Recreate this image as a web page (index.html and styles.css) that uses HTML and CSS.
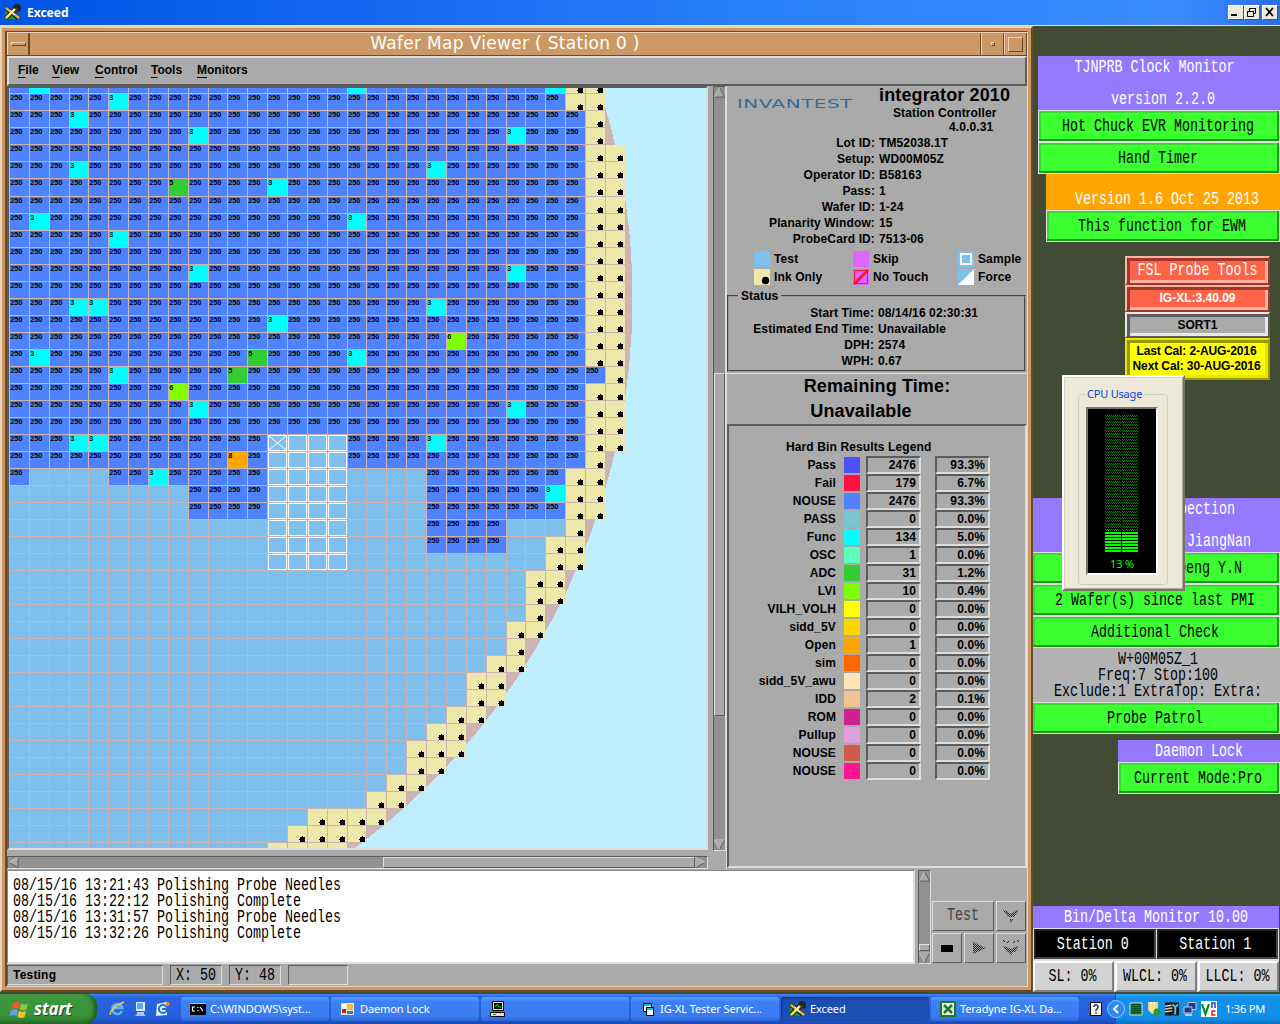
FILE: index.html
```html
<!DOCTYPE html>
<html lang="en">
<head>
<meta charset="utf-8">
<title>Exceed</title>
<link rel="stylesheet" href="styles.css">
</head>
<body>
<svg width="0" height="0" class="defs" aria-hidden="true">
  <symbol id="exceed" viewBox="0 0 16 16">
    <path d="M0 3h4v12H0z" fill="#0a9a3a"/><path d="M4 12h9v3H4z" fill="#0a9a3a"/>
    <circle cx="12" cy="4" r="4" fill="#222"/><path d="M8 4h5v5H8z" fill="#3a3a3a"/>
    <path d="M1 4l12 10" stroke="#111" stroke-width="4"/><path d="M1 14L10 5" stroke="#111" stroke-width="4.500"/>
    <path d="M1 4l13 10" stroke="#e8b040" stroke-width="2.600"/><path d="M1 14L10 5" stroke="#ffe23a" stroke-width="2.500"/>
    <path d="M5 6l5 5M9 5l-4 5" stroke="#fff" stroke-width="1"/>
  </symbol>
</svg>
<div class="desktop">
  <header class="xbar">
    <svg class="xicon"><use href="#exceed"/></svg><b>Exceed</b>
    <div class="winbtns">
      <span><svg viewBox="0 0 13 12"><path d="M2 9h6" stroke="#000" stroke-width="2"/></svg></span>
      <span><svg viewBox="0 0 13 12"><path d="M4.500 5V2.500h6v5H9M4 2.500h7M2.500 5.500h6v5h-6zM2 5.500h7" fill="none" stroke="#000"/></svg></span>
      <span class="gap"><svg viewBox="0 0 13 12"><path d="M3 2l7 8M10 2L3 10" stroke="#000" stroke-width="1.800"/></svg></span>
    </div>
  </header>

  <section class="frame"><div class="frame-in">
    <div class="titlebar">
      <div class="tb-btn tb-menu"><i></i></div>
      <div class="tb-title">Wafer Map Viewer ( Station 0 )</div>
      <div class="tb-btn tb-min"><i></i></div>
      <div class="tb-btn tb-max"><i></i></div>
    </div>
    <nav class="menubar">
      <span class="m1"><u>F</u>ile</span><span class="m2"><u>V</u>iew</span><span class="m3"><u>C</u>ontrol</span><span class="m4"><u>T</u>ools</span><span class="m5"><u>M</u>onitors</span>
    </nav>
    <div class="main">
      <div class="mapcol">
        <div class="mapframe"><svg id="wafer" width="697" height="760" viewBox="9 88 697 760"></svg></div>
        <div class="hscroll">
          <svg class="arrow" viewBox="0 0 12 12"><path d="M11 0.500L1 6l10 5.500z" fill="#aaa" stroke="#5c5c5c"/><path d="M11 .5L1 6" stroke="#dedede"/></svg>
          <div class="hthumb"></div>
          <svg class="arrow" viewBox="0 0 12 12"><path d="M1 0.500L11 6 1 11.500z" fill="#aaa" stroke="#5c5c5c"/><path d="M1 11V.5L11 6" stroke="#dedede" fill="none"/></svg>
        </div>
      </div>
      <div class="vscroll map-v">
        <svg class="arrow" viewBox="0 0 12 12"><path d="M6 .5L.5 11h11z" fill="#aaa" stroke="#5c5c5c"/><path d="M6 .5L.5 11" stroke="#dedede"/></svg>
        <div class="vthumb"></div>
        <svg class="arrow low" viewBox="0 0 12 12"><path d="M.5 1h11L6 11.500z" fill="#aaa" stroke="#5c5c5c"/><path d="M6 11L.5 1h11" stroke="#dedede" fill="none"/></svg>
      </div>
      <aside class="panel">
        <div class="head">
          <div class="logo">INVANTEST</div>
          <div class="prod"><div class="p1">integrator 2010</div><div class="p2">Station Controller</div><div class="p3">4.0.0.31</div></div>
        </div>
        <dl class="info">
          <dt>Lot ID:</dt><dd>TM52038.1T</dd>
          <dt>Setup:</dt><dd>WD00M05Z</dd>
          <dt>Operator ID:</dt><dd>B58163</dd>
          <dt>Pass:</dt><dd>1</dd>
          <dt>Wafer ID:</dt><dd>1-24</dd>
          <dt>Planarity Window:</dt><dd>15</dd>
          <dt>ProbeCard ID:</dt><dd>7513-06</dd>
        </dl>
        <div class="key">
          <svg><rect width="16" height="16" fill="#7ebfee"/></svg><span>Test</span>
          <svg><rect width="16" height="16" fill="#e066ff"/></svg><span>Skip</span>
          <svg><rect width="16" height="16" fill="#7ebfee"/><rect x="3" y="3" width="10" height="10" fill="none" stroke="#fff" stroke-width="2"/></svg><span>Sample</span>
          <svg><rect width="16" height="16" fill="#eee8aa"/><circle cx="11.500" cy="11.500" r="3.700"/></svg><span>Ink Only</span>
          <svg><rect width="16" height="16" fill="#e066ff"/><path d="M1.500 1.500h13v13h-13zM1.500 14.500l13-13" fill="none" stroke="#ff1040"/><path d="M1 15L15 1" stroke="#ff1040" stroke-width="3"/></svg><span>No Touch</span>
          <svg><rect width="16" height="16" fill="#7ebfee"/><path d="M16 0v16H0z" fill="#fff"/></svg><span>Force</span>
        </div>
        <fieldset class="status"><legend>Status</legend>
          <dl class="info">
            <dt>Start Time:</dt><dd>08/14/16 02:30:31</dd>
            <dt>Estimated End Time:</dt><dd>Unavailable</dd>
            <dt>DPH:</dt><dd>2574</dd>
            <dt>WPH:</dt><dd>0.67</dd>
          </dl>
        </fieldset>
        <div class="remain"><div>Remaining Time:</div><div class="un">Unavailable</div></div>
        <div class="bins"><h3>Hard Bin Results Legend</h3><div id="binrows"></div></div>
      </aside>
    </div>
    <div class="logrow">
      <div class="log"><pre class="song">08/15/16 13:21:43 Polishing Probe Needles
08/15/16 13:22:12 Polishing Complete
08/15/16 13:31:57 Polishing Probe Needles
08/15/16 13:32:26 Polishing Complete</pre></div>
      <div class="vscroll log-v">
        <svg class="arrow" viewBox="0 0 12 12"><path d="M6 .5L.5 11h11z" fill="#aaa" stroke="#5c5c5c"/><path d="M6 .5L.5 11" stroke="#dedede"/></svg>
        <div class="vthumb"></div>
        <svg class="arrow low" viewBox="0 0 12 12"><path d="M.5 1h11L6 11.500z" fill="#aaa" stroke="#5c5c5c"/><path d="M6 11L.5 1h11" stroke="#dedede" fill="none"/></svg>
      </div>
      <div class="btns">
        <span class="wide"><span class="song dim">Test</span></span>
        <span><svg viewBox="0 0 16 16"><path d="M0 2l4 1 4 3 4-3 4-1-5 7H5zM6 11h4l-2 4z" fill="url(#dots)"/></svg></span>
        <span><svg viewBox="0 0 16 16"><path d="M2 5h12v7H2z"/></svg></span>
        <span><svg viewBox="0 0 16 16"><path d="M2 2l13 6-13 6z" fill="url(#dots)"/></svg></span>
        <span><svg viewBox="0 0 16 16"><path d="M0 0h2v2H0zM14 0h2v2h-2zM4 1h2v2H4zM10 1h2v2h-2zM0 6l4 1 4 2 4-2 4-1-4 6H4zM6 12h4l-2 4z" fill="url(#dots)"/></svg></span>
      </div>
    </div>
    <div class="statusbar">
      <span class="s1">Testing</span><span class="s2"><span class="song">X: 50</span></span><span class="s2"><span class="song">Y: 48</span></span><span class="s4"></span>
    </div>
  </div></section>

  <section class="w clock">
    <div class="purple two"><span class="song">TJNPRB Clock Monitor</span><span class="song ver">version 2.2.0</span></div>
    <div class="gbtn"><span class="song">Hot Chuck EVR Monitoring</span></div>
    <div class="gbtn"><span class="song">Hand Timer</span></div>
  </section>
  <section class="w ewm">
    <div class="orange"><span class="song">Version 1.6 Oct 25 2013</span></div>
    <div class="gbtn"><span class="song">This function for EWM</span></div>
  </section>
  <section class="w fsl">
    <div class="ridge red h28"><span class="song">FSL Probe Tools</span></div>
    <div class="ridge red">IG-XL:3.40.09</div>
    <div class="ridge gray">SORT1</div>
    <div class="ridge yellow"><div>Last Cal: 2-AUG-2016</div><div>Next Cal: 30-AUG-2016</div></div>
  </section>
  <section class="w pmi">
    <div class="purple two"><span class="song r1">Inspection</span><span class="song r2">JiangNan</span></div>
    <div class="gbtn right"><span class="song">Deng Y.N</span></div>
    <div class="gbtn"><span class="song">2 Wafer(s) since last PMI</span></div>
    <div class="gbtn"><span class="song">Additional Check</span></div>
    <div class="graybox"><span class="song">W+00M05Z_1</span><span class="song">Freq:7 Stop:100</span><span class="song">Exclude:1 ExtraTop: Extra:</span></div>
    <div class="gbtn"><span class="song">Probe Patrol</span></div>
  </section>
  <section class="w cpu">
    <fieldset><legend>CPU Usage</legend>
      <div class="meter"><svg id="meter" width="34" height="138"></svg><span>13 %</span></div>
    </fieldset>
  </section>
  <section class="w daemon">
    <div class="purple"><span class="song">Daemon Lock</span></div>
    <div class="gbtn"><span class="song">Current Mode:Pro</span></div>
  </section>
  <section class="w delta">
    <div class="purple"><span class="song">Bin/Delta Monitor 10.00</span></div>
    <div class="stations"><span><span class="song">Station 0</span></span><span><span class="song">Station 1</span></span></div>
    <div class="limits"><span class="l1"><span class="song">SL: 0%</span></span><span class="l2"><span class="song">WLCL: 0%</span></span><span class="l3"><span class="song">LLCL: 0%</span></span></div>
  </section>

  <footer class="taskbar">
    <div class="start">
      <svg viewBox="0 0 20 18"><path d="M3 3q4-3 7 0L8.500 9q-3-2-7 0z" fill="#f0582a"/><path d="M11 3.500q4 2 7 0L16.500 9.500q-3 2-7 0z" fill="#8cc63e"/><path d="M1 10.500q4-3 7 0L6.500 16q-3-2-7 0z" fill="#5a9cf8"/><path d="M9 11q4 2 7 0l-1.500 6q-3 2-7 0z" fill="#fdc22c"/></svg>
      <em>start</em>
    </div>
    <div class="quick">
      <svg viewBox="0 0 16 16"><path d="M13 10a5 5 0 1 1 .3-3H4" fill="none" stroke="#58b8f8" stroke-width="2.600"/><path d="M1 14Q2 6 15 1" fill="none" stroke="#f8c838" stroke-width="1.400"/></svg>
      <svg viewBox="0 0 16 16"><path d="M4 1h9v9H4z" fill="#d8ecff"/><path d="M5 2h6v6H5z" fill="#5aa8f0"/><path d="M5 11h7v2l2 2H3l2-2z" fill="#a8c8f0"/></svg>
      <svg viewBox="0 0 16 16"><path d="M2 3l10-2v13L1 15z" fill="#e8f4ff"/><circle cx="8" cy="8" r="4" fill="none" stroke="#2070d0" stroke-width="2"/><path d="M7 8h7" stroke="#2070d0" stroke-width="2"/><path d="M13 1v4M11 3h4" stroke="#f08020" stroke-width="2"/></svg>
    </div>
    <div class="tasks">
      <div class="task"><svg viewBox="0 0 16 16"><path d="M0 2h16v12H0z"/><path d="M0 2h16v1H0z" fill="#bbb"/><path d="M5 6H2.500v4H5M8 6v1M8 9v1M10 6l3 4" fill="none" stroke="#fff" stroke-width="1.200"/></svg><span>C:\WINDOWS\syst...</span></div>
      <div class="task"><svg viewBox="0 0 16 16"><path d="M1 2h13v12H1z" fill="#e8e4d8"/><path d="M2 3h4v5H2z" fill="#fff"/><path d="M7 3h6v6H7z" fill="#f8c030"/><path d="M2 8h4v4H2z" fill="#c02020"/><path d="M7 10h6v3H7z" fill="#4070d0"/></svg><span>Daemon Lock</span></div>
      <div class="task pc"><svg viewBox="0 0 16 16"><path d="M2.500 .5h11v9h-11z" fill="#ddd" stroke="#000"/><path d="M4 2h8v6H4z"/><path d="M4.500 5h2l1-2 1 3h3" stroke="#0f0" fill="none"/><path d="M.5 11.500h14v4H.5z" fill="#ddd" stroke="#000"/><path d="M3 13.500h3" stroke="#0a0"/></svg></div>
      <div class="task"><svg viewBox="0 0 16 16"><path d="M3.500 2.500h8v8h-8z" fill="#fff" stroke="#000"/><path d="M4 3h7v2H4z" fill="#0cc"/><path d="M6.500 6.500h7v8h-7z" fill="#fff" stroke="#000"/><path d="M7 7h6v2H7z" fill="#0cc"/></svg><span>IG-XL Tester Servic...</span></div>
      <div class="task on"><svg><use href="#exceed"/></svg><span>Exceed</span></div>
      <div class="task"><svg viewBox="0 0 16 16"><path d="M0 0h16v16H0z" fill="#1a7a2a"/><path d="M2 2h12v12H2z" fill="#e8f4e8"/><path d="M4 4l8 8M12 4l-8 8" stroke="#1a7a2a" stroke-width="2.500"/></svg><span>Teradyne IG-XL Da...</span></div>
    </div>
    <div class="ask"><svg viewBox="0 0 12 14"><path d="M.5 .5h11v13H.5z" fill="#ffffd0" stroke="#000"/><path d="M4 5q0-2 2-2t2 2-2 3v1M6 10.500v1.500" stroke="#1030c0" stroke-width="1.600" fill="none"/></svg></div>
    <div class="tray">
      <svg class="chev" viewBox="0 0 18 18"><circle cx="9" cy="9" r="8.500" fill="#2a8af0" stroke="#8cc8ff"/><path d="M11 5L7 9l4 4" fill="none" stroke="#fff" stroke-width="2"/></svg>
      <svg class="ti" viewBox="0 0 14 14"><path d="M1 1h12v12H1z" fill="#052" stroke="#dde"/><path d="M3 3v9M5 3v9M7 3v9M9 3v9M11 3v9" stroke="#0b3" stroke-dasharray="1 1"/></svg>
      <svg class="ti" viewBox="0 0 14 14"><path d="M1 0h10v10l-6 2-4-4z" fill="#f4d878"/><path d="M4 0v9M7 0v10" stroke="#fff"/><circle cx="10" cy="10" r="3.500" fill="#2a9a2a"/></svg>
      <svg class="ti" viewBox="0 0 15 14"><path d="M0 0h15v14H0z" fill="#181818"/><path d="M0 4l7-1M0 7l8-1M0 10l8-1" stroke="#e8c898" stroke-width="1.500"/><path d="M11 4v9M8 2l3 3 3-3" stroke="#5ac8e8" stroke-width="2" fill="none"/></svg>
      <svg class="ti" viewBox="0 0 14 14"><path d="M5 .5h8v7H5z" fill="#223a8a" stroke="#b8c8e8"/><path d="M1 5h8v6H1z" fill="#223a8a" stroke="#b8c8e8"/><path d="M2 13h7" stroke="#b8c8e8" stroke-width="2"/></svg>
      <svg class="ti vnc" viewBox="0 0 16 16"><path d="M0 0h16v16H0z" fill="#fff"/><path d="M1 3l3.500 10L8 3" fill="none" stroke="#0a8a2a" stroke-width="2.200"/><path d="M11 7V2h3v5" fill="none" stroke="#2040d0" stroke-width="1.500"/><path d="M14.500 10H11v4h3.500" fill="none" stroke="#d02020" stroke-width="1.500"/></svg>
      <time>1:36 PM</time>
    </div>
  </footer>
</div>
<svg width="0" height="0" class="defs"><defs><pattern id="dots" width="2" height="2" patternUnits="userSpaceOnUse"><path d="M0 0h1v1H0zM1 1h1v1H1z" fill="#222"/></pattern></defs></svg>
<script src="app.js"></script>
</body>
</html>
```
FILE: styles.css
```css
* { box-sizing: border-box; }
body { margin: 0; font-family: "Liberation Sans", Arial, sans-serif; color: #000; }
svg { display: block; flex: none; }
dl, dd, h3, pre { margin: 0; }
.defs { position: absolute; }
.desktop { position: relative; width: 1280px; height: 1024px; background: #424b34; overflow: hidden; }

/* tall, thin fixed-width text */
.song { display: block; font: 13.333px/16px "Liberation Mono", "Courier New", monospace; white-space: pre; transform: scaleY(1.34); }

/* outer application bar */
.xbar { display: flex; align-items: center; height: 26px; padding: 0 2px 1px 5px; background: linear-gradient(90deg, #0054e3, #1a6cf2 35%, #2a80fa 60%, #3a8cff 92%, #2c6ee8); border-bottom: 1px solid #e8e4d8; color: #fff; }
.xicon { width: 16px; height: 16px; margin-right: 6px; }
.xbar b { font: bold 12px/16px "Noto Sans", sans-serif; padding-top: 1px; }
.winbtns { display: flex; margin-left: auto; }
.winbtns span { width: 16px; height: 15px; background: #ece9d8; border: 1px solid; border-color: #fff #555 #555 #fff; }
.winbtns svg { width: 13px; height: 12px; }
.winbtns .gap { margin-left: 2px; }

/* window frame */
.frame { position: absolute; left: 0; top: 26px; width: 1033px; height: 966px; padding: 3px; background: #cc9966; border: 2px solid; border-color: #ecd2b8 #6b4a2c #6b4a2c #ecd2b8; }
.frame-in { width: 1023px; height: 956px; border: solid; border-width: 1px 1px 1px 2px; border-color: #6b4a2c #ecd2b8 #ecd2b8 #6b4a2c; background: #aaa; }
.titlebar { display: flex; height: 24px; background: #cc9966; border-top: 1px solid #ecd2b8; border-bottom: 1px solid #6b4a2c; }
.tb-title { flex: 1; text-align: center; color: #fff; font: 17px/21px "DejaVu Sans", sans-serif; letter-spacing: .31px; border: solid; border-width: 0 1px; border-color: #ecd2b8 #6b4a2c; }
.tb-btn { width: 23px; display: flex; align-items: center; justify-content: center; border-left: 1px solid #ecd2b8; border-right: 1px solid #6b4a2c; }
.tb-menu { width: 22px; }
.tb-btn i { border: 1px solid; border-color: #ecd2b8 #6b4a2c #6b4a2c #ecd2b8; }
.tb-menu i { width: 15px; height: 4px; }
.tb-min i { width: 4px; height: 4px; }
.tb-max i { width: 15px; height: 15px; }

.menubar { display: flex; height: 30px; padding-left: 9px; border: 2px solid; border-color: #dedede #5c5c5c #5c5c5c #dedede; font: bold 12px/24px "Liberation Sans", sans-serif; }
.menubar u { text-underline-offset: 3px; }
.m1 { width: 34px; } .m2 { width: 43px; } .m3 { width: 56px; } .m4 { width: 46px; }

.main { display: flex; height: 783px; }
.mapcol { width: 701px; margin-right: 5px; }
.mapframe { border: 2px solid; border-color: #5c5c5c #dedede #dedede #5c5c5c; height: 764px; }
.hscroll, .vscroll { background: #919191; border: 1px solid; border-color: #5c5c5c #dedede #dedede #5c5c5c; display: flex; }
.hscroll { margin-top: 6px; height: 13px; padding-right: 1px; }
.arrow { width: 11px; height: 11px; }
.hthumb { margin-left: auto; width: 312px; background: #aaa; border: 1px solid; border-color: #dedede #5c5c5c #5c5c5c #dedede; }
.vscroll { flex-direction: column; width: 13px; }
.map-v { height: 765px; }
.vthumb { background: #aaa; border: 1px solid; border-color: #dedede #5c5c5c #5c5c5c #dedede; }
.map-v .vthumb { height: 343px; margin-top: 275px; }
.low { margin-top: auto; }

/* right info panel */
.panel { width: 301px; font-weight: bold; font-size: 12px; letter-spacing: .12px; border-left: 1px solid #dedede; }
.head { display: flex; height: 49px; }
.logo { width: 92px; margin-right: 60px; padding-left: 10px; color: #3a6a94; font: 12px/36px "DejaVu Sans", sans-serif; letter-spacing: .3px; transform: scaleX(1.66); transform-origin: 10px 0; }
.p1 { font-size: 18px; line-height: 18px; letter-spacing: .14px; }
.p2 { line-height: 16px; padding: 1px 0 0 14px; }
.p3 { line-height: 13px; padding-left: 70px; }
.info { display: grid; grid-template-columns: 148px auto; column-gap: 4px; grid-auto-rows: 16px; line-height: 16px; white-space: nowrap; }
.info dt { text-align: right; }
.key { display: grid; grid-template-columns: 20px 79px 20px 85px 20px auto; grid-auto-rows: 18px; align-items: center; padding: 3px 0 0 27px; white-space: nowrap; }
.key svg { width: 16px; height: 16px; }
.status { margin: 2px 1px 0 0; padding: 1px 0 0; height: 84px; border: 2px groove #999; min-width: 0; }
.status legend { margin-left: 9px; padding: 0 3px; line-height: 16px; }
.status .info { grid-template-columns: 145px auto; }
.remain { margin-top: 1px; height: 51px; border-top: 1px solid #dedede; font-size: 18px; line-height: 25px; text-align: center; }
.remain .un { padding-right: 32px; }
.bins { height: 444px; width: 300px; border: 2px solid; border-color: #5c5c5c #dedede #dedede #5c5c5c; padding-top: 12px; }
.bins h3 { font-size: 12px; line-height: 18px; padding-left: 57px; }
.binrow { display: flex; align-items: center; height: 18px; line-height: 18px; }
.binrow .nm { width: 107px; text-align: right; margin-right: 8px; }
.binrow .sw { width: 16px; height: 16px; margin-right: 6px; }
.binrow .fld { width: 55px; height: 18px; border: 2px solid; border-color: #5c5c5c #dedede #dedede #5c5c5c; line-height: 14px; text-align: right; padding-right: 3px; margin-right: 14px; }

/* log */
.logrow { display: flex; height: 94px; margin-top: 1px; }
.log { width: 908px; background: #fff; border: solid; border-width: 1px 2px 2px 1px; border-color: #888 #dedede #dedede #888; padding: 9px 0 0 5px; }
.log pre.song { line-height: 11.94px; transform-origin: 0 0; margin-top: -2px; }
.log-v { margin-left: 3px; }
.log-v .vthumb { height: 7px; margin-top: 62px; }
.btns { display: grid; grid-template: 30px 30px / 30px 30px 30px; gap: 2px; align-content: end; margin-left: 1px; padding-bottom: 1px; }
.btns > span { display: flex; align-items: center; justify-content: center; border: 1px solid; border-color: #dedede #5c5c5c #5c5c5c #dedede; }
.btns svg { width: 16px; height: 16px; }
.btns .wide { grid-column: span 2; }
.dim { color: #444; }
.statusbar { display: flex; gap: 7px; padding-top: 1px; }
.statusbar > span { height: 20px; border: 1px solid; border-color: #5c5c5c #dedede #dedede #5c5c5c; }
.s1 { width: 156px; font: bold 12px/18px "Liberation Sans", sans-serif; letter-spacing: .2px; padding-left: 5px; }
.s2 { width: 52px; padding: 2px 0 0 5px; }
.s4 { width: 60px; }

/* desktop widgets */
.w { position: absolute; }
.clock { left: 1038px; top: 56px; width: 242px; }
.ewm { left: 1046px; top: 174px; width: 234px; }
.fsl { left: 1125px; top: 256px; width: 145px; }
.pmi { left: 1033px; top: 498px; width: 247px; }
.cpu { left: 1062px; top: 375px; width: 123px; height: 216px; }
.daemon { left: 1118px; top: 740px; width: 162px; }
.delta { left: 1033px; top: 906px; width: 246px; }
.purple { height: 22px; background: #9479ff; color: #fff; display: flex; flex-direction: column; align-items: center; padding-top: 4px; }
.purple.two { height: 54px; gap: 16px; }
.clock .purple { padding-right: 9px; }
.clock .ver { margin-left: 17px; }
.pmi .purple { align-items: flex-end; }
.r1 { margin-right: 45px; } .r2 { margin-right: 29px; }
.gbtn { height: 32px; display: flex; align-items: center; justify-content: center; background: #3cff32; border: 1px solid #dedede; box-shadow: inset -2px -2px #1f9a18, inset 2px 2px #36dc2e; padding: 2px 2px 0 0; }
.gbtn.right { justify-content: flex-end; padding-right: 37px; }
.pmi .gbtn { border-left: 0; }
.orange { height: 36px; background: #ffa500; color: #fff; display: flex; justify-content: center; align-items: flex-end; padding: 0 0 2px 8px; }
.ridge { height: 27px; border: 2px solid; box-shadow: inset 3px 3px var(--d), inset -3px -3px var(--l); display: flex; flex-direction: column; align-items: center; justify-content: center; font: bold 12px/15px "Liberation Sans", sans-serif; border-color: var(--l) var(--d) var(--d) var(--l); }
.ridge.h28 { height: 29px; padding-top: 1px; }
.red { background: #ff6347; color: #fff; --l: #ffb1a3; --d: #9c392a; }
.gray { height: 26px; background: #aaa; --l: #e8e8e8; --d: #5c5c5c; }
.yellow { height: 42px; background: #ff0; --l: #e6e600; --d: #999900; padding-right: 2px; letter-spacing: -.1px; }
.graybox { height: 54px; background: #b3b3b3; display: flex; flex-direction: column; align-items: center; padding: 4px 0 0 3px; }
.cpu { background: #ece9d8; border: 2px solid; border-color: #fff #77756a #77756a #fff; box-shadow: inset 1px 1px #d4d0c4, inset -1px -1px #aca899; padding: 10px 15px 0 14px; }
.cpu fieldset { margin: 0; height: 198px; border: 1px solid #d0d0bf; border-radius: 4px; padding: 6px 0 0 7px; font: 11px/14px "Noto Sans", sans-serif; letter-spacing: -.2px; }
.cpu legend { color: #0046d5; margin-left: -1px; padding: 0 2px; }
.meter { width: 72px; height: 168px; background: #000; border: 2px solid; border-color: #77756a #fff #fff #77756a; display: flex; flex-direction: column; align-items: center; padding-top: 6px; color: #0f0; }
.meter span { margin-top: 4px; }
.stations, .limits { display: flex; background: #dedede; }
.stations { height: 32px; padding: 1px; gap: 1px; }
.stations > span { flex: 1; background: #000; color: #fff; display: flex; align-items: center; justify-content: center; border: 2px solid; border-color: #222 #444 #444 #222; padding: 1px 4px 0 0; }
.limits { height: 32px; gap: 1px; padding-top: 1px; }
.limits > span { background: #d3d3d3; display: flex; align-items: center; justify-content: center; border: 2px solid; border-color: #fff #808080 #808080 #fff; padding-right: 2px; }
.l1 { width: 81px; } .l2 { width: 82px; } .l3 { width: 81px; }

/* taskbar */
.taskbar { position: absolute; left: 0; right: 0; top: 994px; height: 30px; display: flex; align-items: stretch; background: linear-gradient(#3c8cf0, #2a66e0 10%, #245edb 80%, #1c48b0); color: #fff; font: 11px/16px "Noto Sans", sans-serif; }
.start { width: 97px; display: flex; align-items: center; gap: 4px; padding-left: 10px; border-radius: 0 12px 12px 0; background: linear-gradient(#5cac5c, #3c963c 15%, #3a943a 70%, #2a722a); box-shadow: inset -3px 0 4px #1d5c1d; }
.start svg { width: 20px; height: 18px; overflow: visible; }
.start em { font: italic bold 17px/20px "Open Sans", sans-serif; letter-spacing: -.3px; text-shadow: 1px 1px 1px #1a4a1a; }
.quick { display: flex; align-items: center; gap: 7px; width: 84px; padding-left: 12px; }
.quick svg { width: 16px; height: 16px; }
.tasks { display: flex; gap: 2px; width: 900px; padding: 3px 0; }
.task { display: flex; align-items: center; width: 148px; padding-left: 9px; gap: 4px; white-space: nowrap; border-radius: 3px; letter-spacing: -.1px; background: linear-gradient(#5c9cff, #3c81f3 20%, #3a7cf0 80%, #2c66d8); }
.task svg { width: 16px; height: 16px; }
.task.on { background: #1c4fb4; box-shadow: inset 1px 1px 2px #10307a; }
.ask { width: 34px; display: flex; align-items: center; padding-left: 9px; }
.ask svg { width: 12px; height: 14px; }
.tray { flex: 1; display: flex; align-items: center; background: linear-gradient(#2aaaf8, #1290e9 15%, #1290e9 80%, #0d70c0); border-left: 1px solid #0a5aa8; }
.chev { width: 18px; height: 18px; margin: 0 4px 0 -9px; }
.ti { width: 14px; height: 14px; margin-right: 4px; }
.ti.vnc { width: 16px; height: 16px; }
.tray time { margin-left: 4px; letter-spacing: -.2px; white-space: nowrap; }
```
FILE: app.js
```js
const NS = 'http://www.w3.org/2000/svg';
function add(parent, tag, attrs, text) {
  const e = document.createElementNS(NS, tag);
  for (const k in attrs) e.setAttribute(k, attrs[k]);
  if (text) e.textContent = text;
  parent.appendChild(e);
}

// Wafer map geometry: die column and row edges
const colX = c => Math.round(9 + 19.86 * c);
const rowY = r => (r < 6 ? 93 + 17 * r : 196 + 17 * (r - 6));
const COLOR = { 250: '#4f82ff', 3: '#00ffff', 5: '#32cd32', 6: '#7fff00', 8: '#ffa500' };

// first and last ink-only column of each row, from row -1
const ink = [[28,29],[28,29],[29,29],[29,29]];
for (let r = 3; r <= 20; r++) ink.push([29, 30]);
ink[17] = [30, 30];
ink.push([29,29],[28,29],[28,29],[28,29],[28,28],[27,28],[27,28],[26,27],[26,27],[26,26],[25,26],[25,25],
  [24,25],[23,24],[23,24],[22,23],[21,22],[20,22],[20,21],[19,20],[18,19],[15,18],[14,17],[13,16]);

// dies whose bin is not 250, as row: {column: bin}
const special = {
  '-1': {1:3, 17:3, 27:3}, 0: {5:3}, 1: {3:3}, 2: {9:3, 25:3}, 4: {3:3, 21:3}, 5: {8:5, 13:3},
  7: {1:3, 17:3}, 8: {5:3}, 10: {9:3, 25:3}, 12: {3:3, 4:3, 21:3}, 13: {13:3}, 14: {22:6},
  15: {1:3, 12:5, 17:3}, 16: {5:3, 11:5}, 17: {8:6}, 18: {9:3, 25:3}, 20: {3:3, 4:3, 21:3},
  21: {11:8}, 22: {7:3}, 23: {27:3}
};
const tested = (r, c) => {
  if (r >= 20 && c >= 13 && c <= 16) return false;
  if (r <= 21) return true;
  if (r === 22) return c === 0 || (c >= 5 && c <= 12) || c >= 21;
  if (r <= 24) return (c >= 9 && c <= 12) || c >= 21;
  return r <= 26 && c >= 21 && c <= 24;
};

const map = document.getElementById('wafer');
add(map, 'rect', { x: 9, y: 88, width: 697, height: 760, fill: '#bfefff' });
add(map, 'circle', { cx: -51, cy: 298, r: 683.5, fill: '#ccb4b4', 'shape-rendering': 'crispEdges' });
for (let r = -1; r <= 44; r++) {
  const y = rowY(r), h = rowY(r + 1) - y - 1, [a, b] = ink[r + 1];
  for (let c = 0; c <= b; c++) {
    const x = colX(c), w = colX(c + 1) - x - 1;
    let fill = '#7ebfee', bin = 0;
    if (c >= a) fill = '#eee8aa';
    else if (tested(r, c)) { bin = (special[r] && special[r][c]) || 250; fill = COLOR[bin]; }
    add(map, 'rect', { x: x + 1, y: y + 1, width: w, height: h, fill });
    if (bin && r >= 0) add(map, 'text', { x: x + 1.2, y: y + 7.3 }, String(bin));
    if (c >= a) add(map, 'path', { d: `M${x + 13} ${y + 12}h2v-1h1v1h2v5h-5v-2h-1v-1h1z` });
    if (r >= 20 && r <= 27 && c >= 13 && c <= 16) {
      add(map, 'rect', { x: x + 1.5, y: y + 1.5, width: w - 1, height: h - 1, fill: 'none', stroke: '#fff' });
      if (r === 20 && c === 13) add(map, 'path', { d: `M${x + 2} ${y + 2}l${w - 2} ${h - 2}m0 ${2 - h}l${2 - w} ${h - 2}`, stroke: '#fff' });
    }
  }
}
map.style.font = 'bold 7.3px "Liberation Sans", sans-serif';

// hard bin legend
const bins = [['Pass','#5050ff',2476,'93.3%'],['Fail','#ff1040',179,'6.7%'],['NOUSE','#5082ff',2476,'93.3%'],
  ['PASS','#7ac5cd',0,'0.0%'],['Func','#00ffff',134,'5.0%'],['OSC','#5cffb8',1,'0.0%'],['ADC','#32cd32',31,'1.2%'],
  ['LVI','#7fff00',10,'0.4%'],['VILH_VOLH','#ffff00',0,'0.0%'],['sidd_5V','#ffd700',0,'0.0%'],['Open','#ffa500',1,'0.0%'],
  ['sim','#ff6600',0,'0.0%'],['sidd_5V_awu','#ffe4b5',0,'0.0%'],['IDD','#eec591',2,'0.1%'],['ROM','#d02090',0,'0.0%'],
  ['Pullup','#dda0dd',0,'0.0%'],['NOUSE','#cd5b45',0,'0.0%'],['NOUSE','#ff1493',0,'0.0%']];
document.getElementById('binrows').innerHTML = bins.map(([n, col, k, p]) =>
  `<div class="binrow"><span class="nm">${n}</span><span class="sw" style="background:${col}"></span><span class="fld">${k}</span><span class="fld">${p}</span></div>`).join('');

// CPU meter bars
const meter = document.getElementById('meter');
for (let i = 0; i < 46; i++) {
  const on = i >= 39;
  for (const x of [0, 17]) {
    if (on) add(meter, 'rect', { x, y: i * 3, width: 16, height: 2, fill: '#00ff00' });
    else for (const dy of [0, 1]) add(meter, 'path', { d: `M${x + dy} ${i * 3 + dy + .5}h16`, stroke: '#008000', 'stroke-dasharray': '1 1' });
  }
}
```
